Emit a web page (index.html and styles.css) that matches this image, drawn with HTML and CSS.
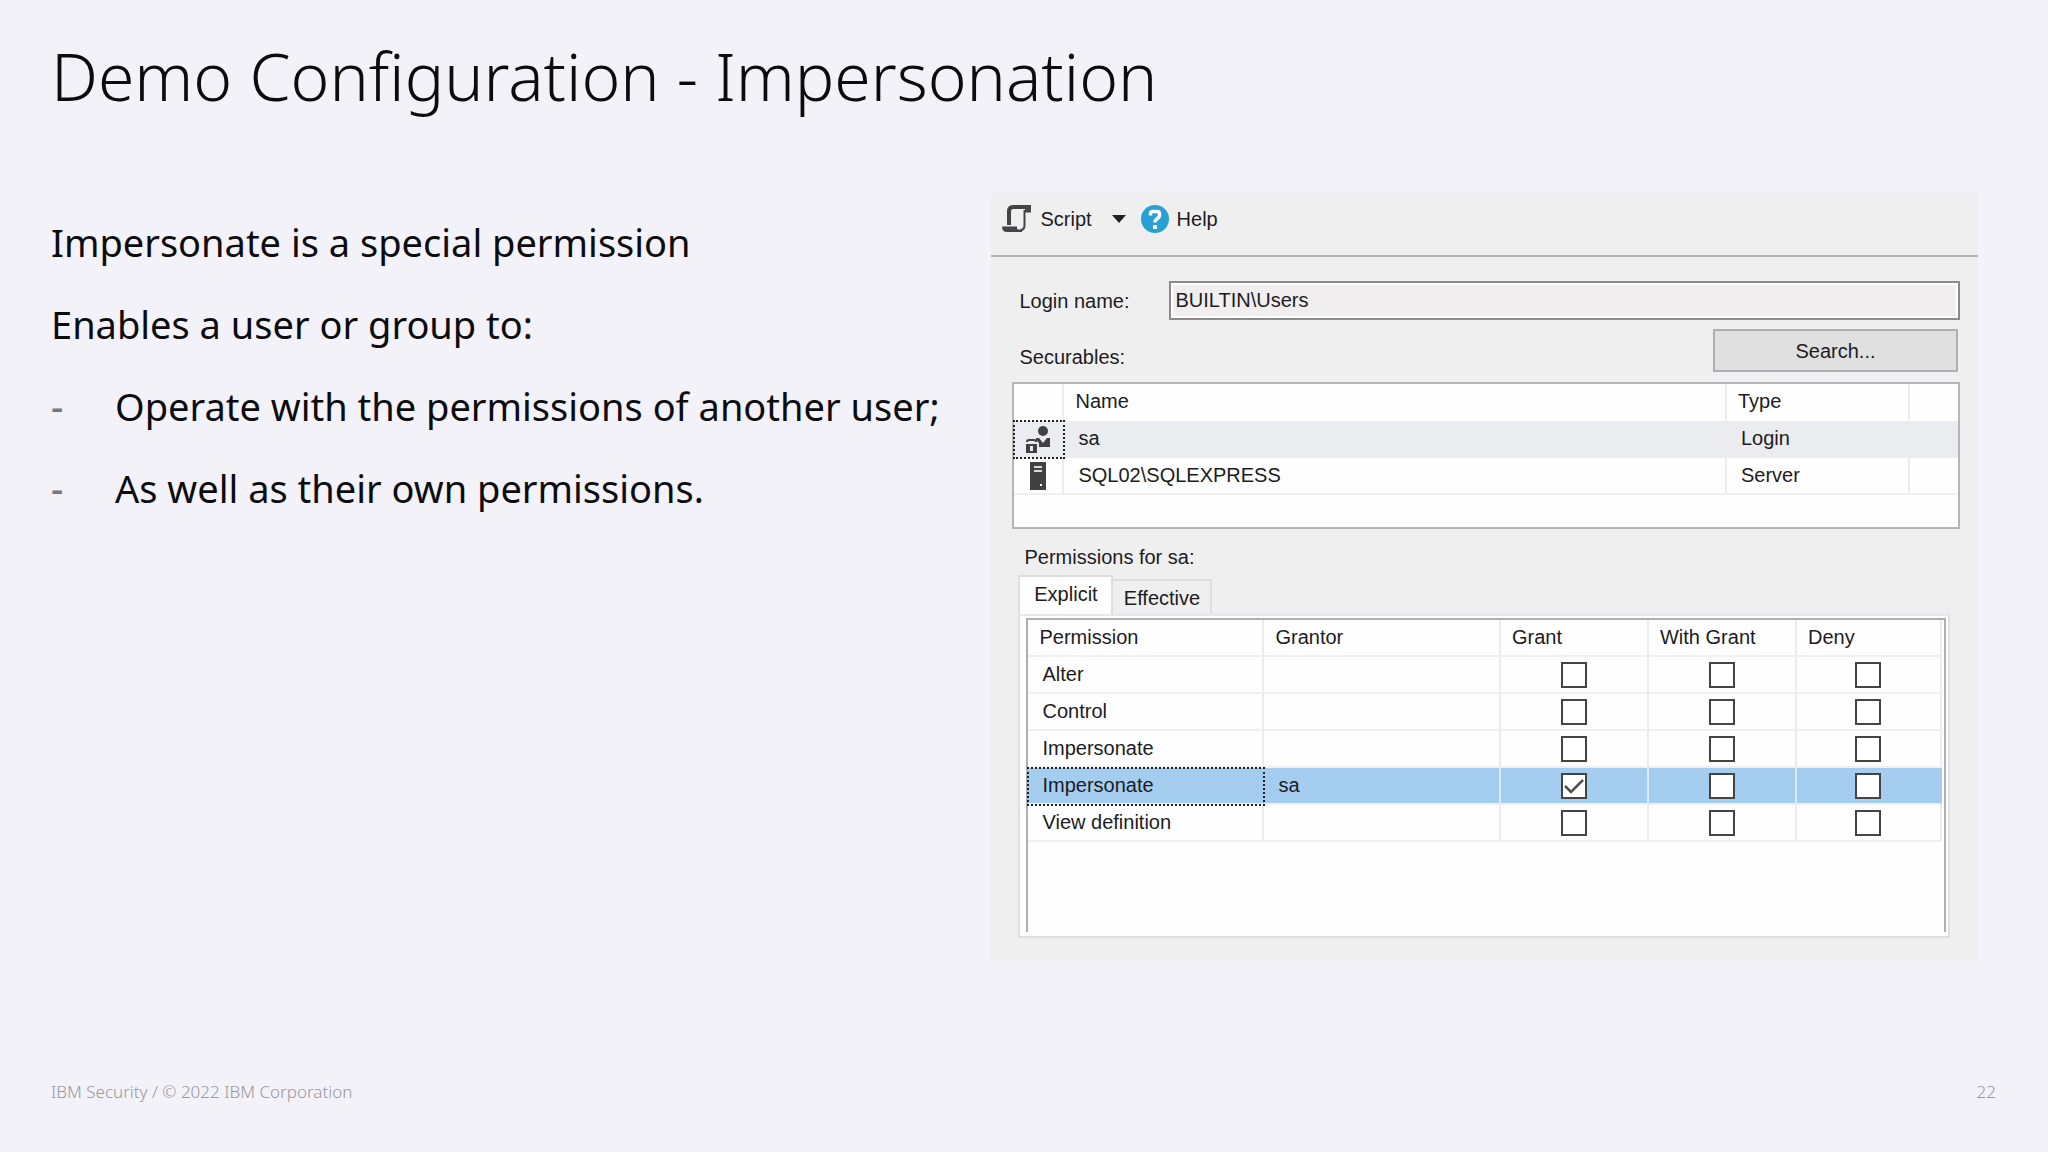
FILE: index.html
```html
<!DOCTYPE html>
<html lang="en">
<head>
<meta charset="utf-8">
<meta name="viewport" content="width=device-width, initial-scale=1">
<title>Demo Configuration - Impersonation</title>
<link rel="stylesheet" href="styles.css">
</head>
<body>
<div class="slide">
  <h1 class="title">Demo Configuration - Impersonation</h1>
  <main class="columns">
    <section class="notes">
      <p>Impersonate is a special permission</p>
      <p>Enables a user or group to:</p>
      <ul class="points">
        <li>Operate with the permissions of another user;</li>
        <li>As well as their own permissions.</li>
      </ul>
    </section>
    <section class="dialog" aria-label="Login properties">
      <div class="toolbar">
        <button class="tool" type="button">
          <svg width="30" height="28" viewBox="0 0 30 28" aria-hidden="true">
            <path d="M7 20V6.500Q7 2 11 2H27V5.500H23" fill="none" stroke="#454547" stroke-width="4"/>
            <path d="M22.500 5V20Q22.500 25 18.500 25" fill="none" stroke="#454547" stroke-width="2"/>
            <path d="M0 21.500H15V23.500Q15 24.500 16.500 24.500H20V27H5Q0 27 0 21.500Z" fill="#454547"/>
          </svg>
          <span>Script</span>
          <svg class="caret" width="14" height="8" viewBox="0 0 14 8" aria-hidden="true"><path d="M0 0H14L7 8Z" fill="#222"/></svg>
        </button>
        <button class="tool" type="button">
          <svg width="28" height="28" viewBox="0 0 28 28" aria-hidden="true">
            <circle cx="14" cy="14" r="14" fill="#2a9fd6"/>
            <path d="M9.500 10.500V8.500Q9.500 6.500 12 6.500H16Q18.500 6.500 18.500 9V10.500Q18.500 12 16.500 13.500Q14 15 14 17.500" fill="none" stroke="#fff" stroke-width="3.500"/>
            <path d="M12 20H16V24H12Z" fill="#fff"/>
          </svg>
          <span>Help</span>
        </button>
      </div>
      <div class="content">
        <div class="field">
          <label for="login">Login name:</label>
          <input id="login" class="login" type="text" value="BUILTIN\Users" readonly>
        </div>
        <div class="securables-bar">
          <span id="securables">Securables:</span>
          <button class="search" type="button">Search...</button>
        </div>
        <div class="list-box">
          <table class="grid securables" aria-labelledby="securables">
            <colgroup><col class="col-icon"><col><col class="col-type"><col class="col-end"></colgroup>
            <thead><tr><th></th><th>Name</th><th>Type</th><th></th></tr></thead>
            <tbody>
              <tr class="current">
                <td class="icon focused">
                  <svg width="24" height="28" viewBox="0 0 24 28" aria-hidden="true">
                    <circle cx="17" cy="6" r="5" fill="#414143"/>
                    <path d="M10 13H13L17 18L21 13H24V22H13V18L10 15Z" fill="#414143"/>
                    <path d="M1 17Q1 15 3 15H8Q10 15 10 17" fill="none" stroke="#414143" stroke-width="2"/>
                    <path fill-rule="evenodd" d="M0 19H11V28H0ZM4 21V26H7V21Z" fill="#414143"/>
                  </svg>
                </td>
                <td>sa</td><td>Login</td><td></td>
              </tr>
              <tr>
                <td class="icon">
                  <svg width="16" height="28" viewBox="0 0 16 28" aria-hidden="true">
                    <path d="M0 0H16V28H0Z" fill="#414143"/>
                    <path d="M4 5H12M4 9H12" stroke="#d8d8d8" stroke-width="2"/>
                    <path d="M10 22H12V24H10Z" fill="#fff"/>
                  </svg>
                </td>
                <td>SQL02\SQLEXPRESS</td><td>Server</td><td></td>
              </tr>
            </tbody>
          </table>
        </div>
        <div id="perm-label" class="perm-label">Permissions for sa:</div>
        <div class="tabs" role="tablist" aria-labelledby="perm-label">
          <button class="tab active" type="button" role="tab" aria-selected="true">Explicit</button>
          <button class="tab" type="button" role="tab" aria-selected="false">Effective</button>
        </div>
        <div class="panel" role="tabpanel">
          <div class="perm-box">
            <table class="grid permissions" aria-labelledby="perm-label">
              <colgroup><col class="col-name"><col><col class="col-check"><col class="col-check"><col class="col-check"></colgroup>
              <thead><tr><th>Permission</th><th>Grantor</th><th>Grant</th><th>With Grant</th><th>Deny</th></tr></thead>
              <tbody>
                <tr><td>Alter</td><td></td><td class="check"><input type="checkbox" aria-label="Alter: Grant"></td><td class="check"><input type="checkbox" aria-label="Alter: With Grant"></td><td class="check"><input type="checkbox" aria-label="Alter: Deny"></td></tr>
                <tr><td>Control</td><td></td><td class="check"><input type="checkbox" aria-label="Control: Grant"></td><td class="check"><input type="checkbox" aria-label="Control: With Grant"></td><td class="check"><input type="checkbox" aria-label="Control: Deny"></td></tr>
                <tr><td>Impersonate</td><td></td><td class="check"><input type="checkbox" aria-label="Impersonate: Grant"></td><td class="check"><input type="checkbox" aria-label="Impersonate: With Grant"></td><td class="check"><input type="checkbox" aria-label="Impersonate: Deny"></td></tr>
                <tr class="selected"><td class="focused">Impersonate</td><td>sa</td><td class="check"><input type="checkbox" checked aria-label="Impersonate by sa: Grant"></td><td class="check"><input type="checkbox" aria-label="Impersonate by sa: With Grant"></td><td class="check"><input type="checkbox" aria-label="Impersonate by sa: Deny"></td></tr>
                <tr><td>View definition</td><td></td><td class="check"><input type="checkbox" aria-label="View definition: Grant"></td><td class="check"><input type="checkbox" aria-label="View definition: With Grant"></td><td class="check"><input type="checkbox" aria-label="View definition: Deny"></td></tr>
              </tbody>
            </table>
          </div>
        </div>
      </div>
    </section>
  </main>
  <footer class="footer">
    <span>IBM Security / © 2022 IBM Corporation</span>
    <span>22</span>
  </footer>
</div>
</body>
</html>
```
FILE: styles.css
```css
* { box-sizing: border-box; }

body {
  margin: 0;
  background: #f3f2f8;
  color: #0c0c0e;
  font-family: "Noto Sans", sans-serif;
}

.slide {
  display: flex;
  flex-direction: column;
  min-height: 100vh;
  padding: 30px 52px 48px 51px;
}

.title {
  margin: 0;
  padding-bottom: 73px;
  font-size: 66px;
  font-weight: 300;
  line-height: 90px;
}

.columns {
  display: grid;
  grid-template-columns: minmax(0, 235fr) minmax(0, 251fr);
}

/* Talking points */

.notes {
  padding-top: 23px;
  font-size: 38px;
  line-height: 52px;
}

.notes p { margin: 0 0 30px; }

.points {
  display: grid;
  gap: 30px;
  margin: 0;
  padding: 0;
  list-style: none;
}

.points li {
  display: grid;
  grid-template-columns: 64px 1fr;
  white-space: nowrap;
}

.points li::before {
  content: "-";
  color: #77777c;
  font-weight: 500;
}

/* Login properties dialog */

.dialog {
  margin-right: 18px;
  padding-bottom: 22px;
  background: #f0eff0;
  color: #1c1c22;
  font-family: "Liberation Sans", Arial, sans-serif;
  font-size: 20px;
  line-height: 24px;
}

.dialog button,
.dialog input {
  color: inherit;
  font: inherit;
}

.toolbar {
  display: flex;
  gap: 15px;
  height: 64px;
  padding: 12px 11px 22px;
  border-bottom: 2px solid #b2b1b2;
}

.tool {
  display: flex;
  align-items: center;
  gap: 8px;
  padding: 0;
  border: 0;
  background: none;
}

.caret { margin-left: 12px; }

.content { padding: 24px 18px 0 21px; }

.field {
  display: flex;
  align-items: center;
  padding-left: 7px;
}

.field label { flex: 0 0 150px; }

.login {
  flex: 1;
  min-width: 0;
  height: 39px;
  padding: 0 4px;
  border: 2px solid #8b898b;
  outline: 2px solid #fff;
  outline-offset: -4px;
  background: #f0eeef;
}

.securables-bar {
  display: flex;
  align-items: center;
  justify-content: space-between;
  padding: 9px 2px 10px 7px;
}

.securables-bar span { padding-top: 12px; }

.search {
  width: 245px;
  height: 43px;
  border: 2px solid #b0aeb0;
  background: #e1e0e1;
}

.list-box {
  min-height: 147px;
  border: 2px solid #b5b4b7;
  background: #fefefe;
}

.grid {
  width: 100%;
  border-spacing: 0;
  table-layout: fixed;
}

.grid th,
.grid td {
  height: 37px;
  padding: 0 0 2px 14px;
  border-right: 2px solid #ececee;
  border-bottom: 2px solid #f0f0f1;
  font-weight: 400;
  text-align: left;
  white-space: nowrap;
}

.grid th { padding-left: 11px; }

.grid .focused {
  outline: 2px dotted #222;
  outline-offset: -1px;
}

.col-icon { width: 50px; }
.col-type { width: 183px; }
.col-end { width: 48px; }
.col-name { width: 236px; }
.col-check { width: 148px; }
.col-check:last-child { width: 145px; }

.securables th { border-bottom-color: transparent; }

.securables th:last-child,
.securables td:last-child { border-right: 0; }

.securables .icon {
  padding: 0;
  text-align: center;
}

.grid svg {
  display: block;
  margin: 0 auto;
}

.securables .current td {
  border-color: #eaecef;
  background: #eaecef;
}

.perm-label { padding: 16px 0 6px 12px; }

.tabs {
  display: flex;
  align-items: flex-end;
  padding-left: 6px;
}

.tab {
  width: 99px;
  height: 35px;
  padding: 0;
  border: 2px solid #dfdedf;
  border-bottom: 0;
  border-left: 0;
  background: #f0eff0;
}

.tab.active {
  width: 95px;
  height: 39px;
  padding-bottom: 4px;
  border-left: 2px solid #dfdedf;
  background: #fefefe;
}

.panel {
  margin: 0 10px 0 6px;
  padding: 2px 2px 4px 6px;
  border: 2px solid #dfdee1;
  border-top-color: #e8e7e9;
  background: #fefefe;
}

.perm-box {
  min-height: 314px;
  padding-right: 2px;
  border: 2px solid #b0aeb1;
  border-bottom: 0;
}

.permissions .check {
  padding: 0;
  text-align: center;
}

.check input {
  display: block;
  width: 26px;
  height: 26px;
  margin: 1px auto 0;
  border: 2px solid #444;
  background: #fff;
  appearance: none;
}

.check input:checked {
  background: #fff url("data:image/svg+xml,%3Csvg xmlns='http://www.w3.org/2000/svg' viewBox='0 0 22 22'%3E%3Cpath d='M2 11L8 17L20 5' fill='none' stroke='%23505050' stroke-width='2.500'/%3E%3C/svg%3E") center / 22px 22px no-repeat;
}

.permissions .selected td {
  border-right-color: #d8edf8;
  background: #a4cdef;
}

.permissions .selected td:last-child,
.permissions .selected td:first-child { border-right-color: #a4cdef; }

/* Footer */

.footer {
  display: flex;
  justify-content: space-between;
  margin-top: auto;
  color: #98979d;
  font-size: 17px;
  font-weight: 300;
  line-height: 24px;
}
```
